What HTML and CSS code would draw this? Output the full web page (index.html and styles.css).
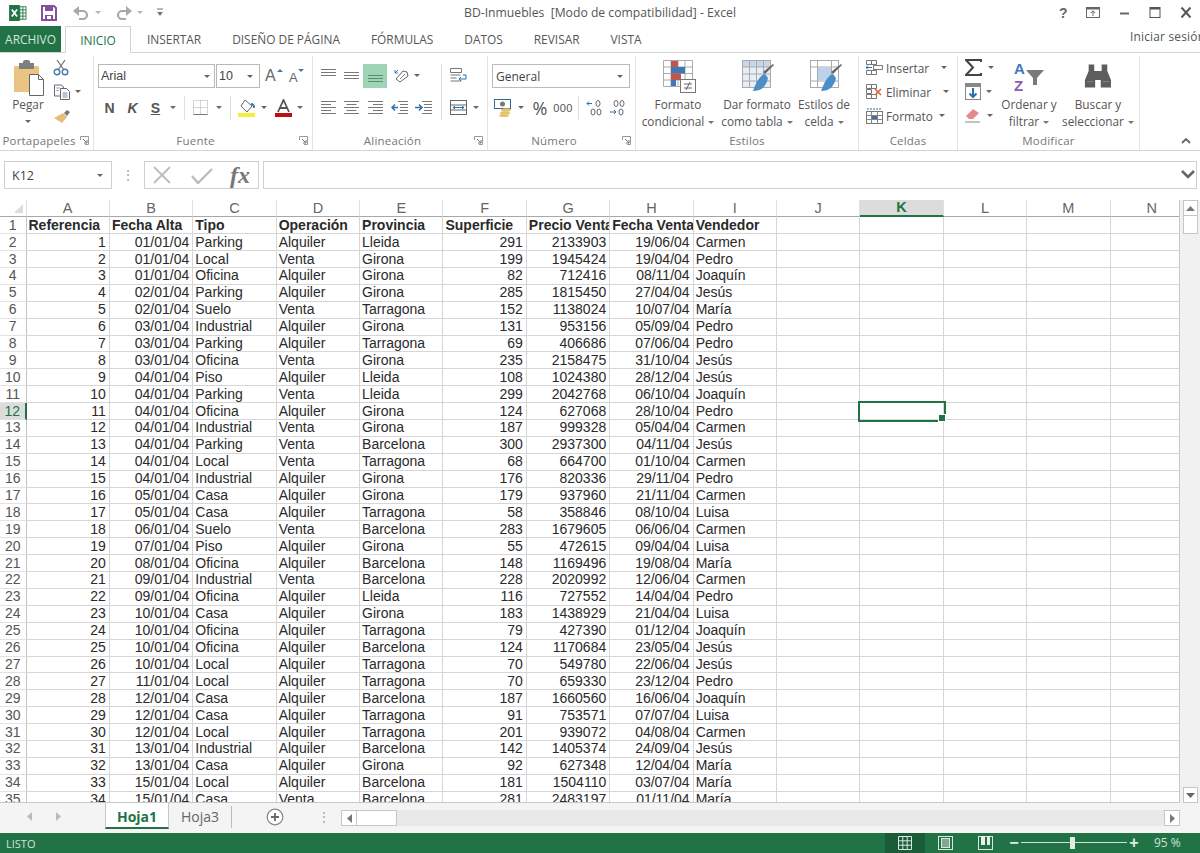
FILE: index.html
```html
<!DOCTYPE html>
<html lang="es">
<head>
<meta charset="utf-8">
<title>BD-Inmuebles - Excel</title>
<link rel="stylesheet" href="styles.css">
</head>
<body>
<div class="app">
  <header class="titlebar">
    <div class="qat">
      <svg class="qat-logo" width="18" height="16" viewBox="0 0 20 18"><rect x="8" y="2" width="11" height="14" fill="#fff" stroke="#217346"/><path d="M12 2v14M15.500 2v14M8 5.500h11M8 9h11M8 12.500h11" stroke="#217346" stroke-width="1"/><rect x="0" y="0" width="12" height="18" fill="#217346"/><path d="M3 5l6 8M9 5l-6 8" stroke="#fff" stroke-width="2"/></svg>
      <svg class="qat-save" width="16" height="16" viewBox="0 0 16 16"><path d="M1 1h12l2 2v12H1z" fill="#fff" stroke="#80519e" stroke-width="2"/><rect x="4" y="1" width="8" height="5" fill="#80519e"/><rect x="4" y="10" width="8" height="5" fill="#80519e"/><rect x="6" y="11" width="4" height="3" fill="#fff"/></svg>
      <svg class="qat-undo" width="16" height="14" viewBox="0 0 16 14"><path d="M3 5h7a4 4 0 0 1 0 8H6" fill="none" stroke="#a9a9a9" stroke-width="2.200"/><path d="M6 0v10L0 5z" fill="#a9a9a9"/></svg>
      <i class="caret light qat-c1"></i>
      <svg class="qat-redo" width="16" height="14" viewBox="0 0 16 14"><path d="M13 5H6a4 4 0 0 0 0 8h4" fill="none" stroke="#a9a9a9" stroke-width="2.200"/><path d="M10 0v10l6-5z" fill="#a9a9a9"/></svg>
      <i class="caret light qat-c2"></i>
      <svg class="qat-more" width="8" height="9" viewBox="0 0 8 9"><path d="M1 1h6" stroke="#777"/><path d="M1 4h6L4 8z" fill="#777"/></svg>
    </div>
    <div class="doc-title">BD-Inmuebles&nbsp; [Modo de compatibilidad] - Excel</div>
    <div class="win">
      <span class="win-help">?</span>
      <svg width="14" height="11" viewBox="0 0 14 11"><rect x=".5" y=".5" width="13" height="10" fill="none" stroke="#666"/><path d="M.5 1.500h13" stroke="#666" stroke-width="2"/><path d="M7 9V4M4.800 6L7 3.800 9.200 6" fill="none" stroke="#666"/></svg>
      <svg width="14" height="11" viewBox="0 0 14 11"><path d="M3 6.500h9" stroke="#666" stroke-width="2"/></svg>
      <svg width="14" height="11" viewBox="0 0 14 11"><rect x="2" y=".5" width="10" height="10" fill="none" stroke="#555"/><path d="M2 1.500h10" stroke="#555" stroke-width="2"/></svg>
      <svg width="14" height="11" viewBox="0 0 14 11"><path d="M2.500 .5l9 10M11.500 .5l-9 10" stroke="#555" stroke-width="2"/></svg>
    </div>
  </header>

  <nav class="tabs">
    <span class="tab-file">ARCHIVO</span>
    <span class="tab-home">INICIO</span>
    <span class="tab">INSERTAR</span>
    <span class="tab">DISEÑO DE PÁGINA</span>
    <span class="tab">FÓRMULAS</span>
    <span class="tab">DATOS</span>
    <span class="tab">REVISAR</span>
    <span class="tab">VISTA</span>
    <span class="signin">Iniciar sesión</span>
  </nav>

  <section class="ribbon">
    <div class="grp g-clip">
      <div class="body">
        <div class="big paste">
          <svg width="32" height="36" viewBox="0 0 32 36"><rect x="1" y="6" width="25" height="26" rx="1" fill="#eac483"/><rect x="6" y="3" width="15" height="6" fill="#7f7f7f"/><rect x="10" y="0" width="7" height="5" rx="2" fill="#7f7f7f"/><path d="M16.500 14.500h9l5 5v16h-14z" fill="#fff" stroke="#666"/><path d="M25.500 14.500v5h5" fill="none" stroke="#666"/></svg>
          <span>Pegar</span>
          <i class="caret pad"></i>
        </div>
        <div class="col">
          <div class="row24 ctr"><svg width="16" height="17" viewBox="0 0 16 17"><path d="M4 1l7 10M12 1L5 11" stroke="#777" stroke-width="1.300"/><circle cx="4" cy="13" r="2.800" fill="none" stroke="#4a78a8" stroke-width="1.400"/><circle cx="12" cy="13" r="2.800" fill="none" stroke="#4a78a8" stroke-width="1.400"/></svg></div>
          <div class="row24 ctr"><svg width="17" height="16" viewBox="0 0 17 16"><path d="M1.500 1h7l2 2v9h-9z" fill="#fff" stroke="#666"/><path d="M7.500 4.500h6l3 3v8h-9z" fill="#fff" stroke="#666"/><path d="M3.500 4h3M3.500 6.500h2M9.500 9h5M9.500 11h5M9.500 13h5" stroke="#6a8fb5"/></svg><i class="caret near"></i></div>
          <div class="row24 ctr"><svg width="18" height="15" viewBox="0 0 18 15"><path d="M11 5l3-3 3 2-3 4z" fill="#777"/><path d="M1 10l9-5 4 4-5 6z" fill="#e4bd7c"/></svg></div>
        </div>
      </div>
      <div class="label"><span>Portapapeles</span><svg class="launch" width="9" height="9" viewBox="0 0 9 9"><path d="M.5 4V.5H8.500V8.500H5" fill="none" stroke="#999"/><path d="M3 3l4 4M7 4v3H4" fill="none" stroke="#777"/></svg></div>
    </div>

    <div class="grp g-font">
      <div class="body rows">
        <div class="rw">
          <div class="combo c-font"><span>Arial</span><i class="caret"></i></div>
          <div class="combo c-size"><span>10</span><i class="caret"></i></div>
          <span class="btn w-grow"><svg width="22" height="19" viewBox="0 0 22 19"><text x="3" y="15" class="a-big">A</text><path d="M15 6l3-3 3 3z" fill="#4a78a8"/></svg></span>
          <span class="btn w-shrink"><svg width="20" height="19" viewBox="0 0 20 19"><text x="3" y="15.500" class="a-small">A</text><path d="M12 3l3 3 3-3z" fill="#4a78a8"/></svg></span>
        </div>
        <div class="rw">
          <span class="btn w23 fmt b">N</span>
          <span class="btn w23 fmt k">K</span>
          <span class="btn w23 fmt s">S</span>
          <span class="btn w12"><i class="caret"></i></span>
          <i class="sep m5"></i>
          <span class="btn w20"><svg width="15" height="15" viewBox="0 0 15 15"><path d="M.5.5h14v14H.5zM7.500.5v14M.5 7.500h14" fill="none" stroke="#aaa" stroke-dasharray="1 1"/><path d="M.5 14.500h14" stroke="#777"/></svg></span>
          <span class="btn w18"><i class="caret"></i></span>
          <i class="sep m-fill"></i>
          <span class="btn w22"><svg width="18" height="18" viewBox="0 0 18 18"><path d="M7 1l7 6-5 6-6-6z" fill="#fff" stroke="#666"/><path d="M13 5c2 0 3 2 3 4" stroke="#4a78a8" stroke-width="2" fill="none"/><rect x="0" y="14" width="17" height="4" fill="#f6ee3a"/></svg></span>
          <span class="btn w12"><i class="caret"></i></span>
          <span class="btn w22 ml2"><svg width="17" height="18" viewBox="0 0 17 18"><path d="M3 13L8.500 1 14 13M5 9h7" fill="none" stroke="#555" stroke-width="1.800"/><rect x="0" y="14" width="17" height="4" fill="#c00b14"/></svg></span>
          <span class="btn w12"><i class="caret"></i></span>
        </div>
      </div>
      <div class="label"><span>Fuente</span><svg class="launch" width="9" height="9" viewBox="0 0 9 9"><path d="M.5 4V.5H8.500V8.500H5" fill="none" stroke="#999"/><path d="M3 3l4 4M7 4v3H4" fill="none" stroke="#777"/></svg></div>
    </div>

    <div class="grp g-align">
      <div class="body split">
        <div class="rows al-left">
          <div class="rw">
            <span class="btn w23"><svg width="15" height="15" viewBox="0 0 15 15"><path d="M0 1.500h15M0 4.500h15M0 7.500h15" stroke="#777"/></svg></span>
            <span class="btn w23"><svg width="15" height="15" viewBox="0 0 15 15"><path d="M0 4.500h15M0 7.500h15M0 10.500h15" stroke="#777"/></svg></span>
            <span class="btn w24 on"><svg width="15" height="15" viewBox="0 0 15 15"><path d="M0 7.500h15M0 10.500h15M0 13.500h15" stroke="#5e8a72"/></svg></span>
            <span class="btn w18 ml-or"><svg width="18" height="16" viewBox="0 0 18 16"><path d="M2 11l7-8 4 1 1 4-8 6z" fill="#fff" stroke="#666"/><path d="M4 2l-3 3M1 2v3h3" fill="none" stroke="#4a78a8"/><path d="M11 6l-5 5" stroke="#888"/></svg></span>
            <i class="caret"></i>
          </div>
          <div class="rw">
            <span class="btn w23"><svg width="15" height="13" viewBox="0 0 15 13"><path d="M0 .5h15M0 3.500h10M0 6.500h15M0 9.500h10M0 12.500h15" stroke="#777"/></svg></span>
            <span class="btn w23"><svg width="15" height="13" viewBox="0 0 15 13"><path d="M0 .5h15M2.500 3.500h10M0 6.500h15M2.500 9.500h10M0 12.500h15" stroke="#777"/></svg></span>
            <span class="btn w24"><svg width="15" height="13" viewBox="0 0 15 13"><path d="M0 .5h15M5 3.500h10M0 6.500h15M5 9.500h10M0 12.500h15" stroke="#777"/></svg></span>
            <span class="btn w24"><svg width="17" height="13" viewBox="0 0 17 13"><path d="M7 .5h10M9 3.500h8M9 6.500h8M9 9.500h8M7 12.500h10" stroke="#777"/><path d="M7 6.500H1M4 3.500l-3 3 3 3" fill="none" stroke="#2f6fb0" stroke-width="1.500"/></svg></span>
            <span class="btn w24"><svg width="17" height="13" viewBox="0 0 17 13"><path d="M7 .5h10M9 3.500h8M9 6.500h8M9 9.500h8M7 12.500h10" stroke="#777"/><path d="M0 6.500h6M4 3.500l3 3-3 3" fill="none" stroke="#2f6fb0" stroke-width="1.500"/></svg></span>
          </div>
        </div>
        <i class="sep tall"></i>
        <div class="rows al-right">
          <div class="rw"><span class="btn w24"><svg width="17" height="16" viewBox="0 0 17 16"><path d="M.5.5h11v4H.5zM.5 7h10M.5 10h6M.5 13h11" fill="none" stroke="#777"/><path d="M13 7h3v4H9M11 9l-2 2 2 2" fill="none" stroke="#2f6fb0"/></svg></span></div>
          <div class="rw"><span class="btn w24"><svg width="17" height="15" viewBox="0 0 17 15"><rect x=".5" y=".5" width="16" height="14" fill="#fff" stroke="#666"/><path d="M.5 5h16M.5 10h16" stroke="#666"/><path d="M3 7.500h11M5 6l-2 1.500L5 9M12 6l2 1.500L12 9" fill="none" stroke="#2f6fb0"/></svg></span><span class="btn w12"><i class="caret"></i></span></div>
        </div>
      </div>
      <div class="label"><span>Alineación</span><svg class="launch" width="9" height="9" viewBox="0 0 9 9"><path d="M.5 4V.5H8.500V8.500H5" fill="none" stroke="#999"/><path d="M3 3l4 4M7 4v3H4" fill="none" stroke="#777"/></svg></div>
    </div>

    <div class="grp g-num">
      <div class="body rows">
        <div class="rw"><div class="combo c-num"><span>General</span><i class="caret"></i></div></div>
        <div class="rw">
          <span class="btn w22"><svg width="18" height="18" viewBox="0 0 18 18"><rect x=".5" y=".5" width="16" height="9" fill="#fff" stroke="#33669a"/><circle cx="8.500" cy="5" r="2.500" fill="#777"/><ellipse cx="12" cy="11" rx="5" ry="1.800" fill="#e8c36f"/><ellipse cx="11" cy="14" rx="5" ry="1.800" fill="#e8c36f"/><ellipse cx="10" cy="16.500" rx="5" ry="1.500" fill="#e8c36f"/></svg></span>
          <span class="btn w13"><i class="caret"></i></span>
          <span class="btn w26 pct">%</span>
          <span class="btn w20 thou">000</span>
          <i class="sep m-num"></i>
          <span class="btn w22 dec"><svg width="18" height="16" viewBox="0 0 18 16"><path d="M6 3.500H1M3 1.500l-2 2 2 2" fill="none" stroke="#2f6fb0"/><ellipse cx="12" cy="3.500" rx="2" ry="3" fill="none" stroke="#666"/><ellipse cx="7" cy="12" rx="2" ry="3" fill="none" stroke="#666"/><ellipse cx="13" cy="12" rx="2" ry="3" fill="none" stroke="#666"/></svg></span>
          <span class="btn w22 ml1 dec"><svg width="18" height="16" viewBox="0 0 18 16"><ellipse cx="7" cy="3.500" rx="2" ry="3" fill="none" stroke="#666"/><ellipse cx="13" cy="3.500" rx="2" ry="3" fill="none" stroke="#666"/><path d="M1 12h6M5 10l2 2-2 2" fill="none" stroke="#2f6fb0"/><ellipse cx="12" cy="12" rx="2" ry="3" fill="none" stroke="#666"/></svg></span>
        </div>
      </div>
      <div class="label"><span>Número</span><svg class="launch" width="9" height="9" viewBox="0 0 9 9"><path d="M.5 4V.5H8.500V8.500H5" fill="none" stroke="#999"/><path d="M3 3l4 4M7 4v3H4" fill="none" stroke="#777"/></svg></div>
    </div>

    <div class="grp g-style">
      <div class="body">
        <div class="big w84">
          <svg class="nudge" width="33" height="33" viewBox="0 0 33 33"><path d="M.5.5h29v26H.5zM.5 7h29M.5 13.500h29M.5 20h29M8 .5v26M15 .5v26M22 .5v26" fill="none" stroke="#aaa"/><rect x="8" y="1" width="7" height="6" fill="#c0574a"/><rect x="8" y="7" width="14" height="6.500" fill="#3f78b8"/><rect x="8" y="13.500" width="10" height="6.500" fill="#c0574a"/><rect x="8" y="20" width="5" height="6" fill="#3f78b8"/><rect x="17.500" y="19.500" width="15" height="13" fill="#fff" stroke="#777"/><path d="M21 24h8M21 28h8M27 22l-4 8" stroke="#666"/></svg>
          <span>Formato</span>
          <span>condicional<i class="caret inl"></i></span>
        </div>
        <div class="big w74">
          <svg class="nudge" width="33" height="33" viewBox="0 0 33 33"><rect x=".5" y=".5" width="28" height="27" fill="#e8eef5" stroke="#aaa"/><rect x="1" y="1" width="27" height="6" fill="#c7d6e8"/><path d="M.5 7h28M.5 14h28M.5 21h28M7.500 .5v27M14.500 .5v27M21.500 .5v27" stroke="#aaa"/><path d="M23 14l9-9-1-1-10 8z" fill="#666"/><path d="M23 14c-4 1-8 6-12 17 8 0 13-4 15-13z" fill="#4a8ec8"/></svg>
          <span>Dar formato</span>
          <span>como tabla<i class="caret inl"></i></span>
        </div>
        <div class="big w60">
          <svg class="nudge2" width="33" height="33" viewBox="0 0 33 33"><rect x=".5" y=".5" width="28" height="27" fill="#fff" stroke="#aaa"/><path d="M.5 7h28M.5 21h28M7.500 .5v27M21.500 .5v27" stroke="#aaa"/><rect x="8" y="7.500" width="13" height="13" fill="#bcd2ea"/><path d="M23 14l9-9-1-1-10 8z" fill="#666"/><path d="M23 14c-4 1-8 6-12 17 8 0 13-4 15-13z" fill="#4a8ec8"/></svg>
          <span>Estilos de</span>
          <span>celda<i class="caret inl"></i></span>
        </div>
      </div>
      <div class="label"><span>Estilos</span></div>
    </div>

    <div class="grp g-cells">
      <div class="body col">
        <div class="row24 cell-row"><svg width="17" height="16" viewBox="0 0 17 16"><path d="M.5.5h5v4h-5zM5.500.5h5v4h-5zM.5 10.500h5v4h-5zM5.500 10.500h5v4h-5zM7.500 5.500h9v4h-9z" fill="#fff" stroke="#777"/><path d="M6 7.500H0M2 5.500l-2 2 2 2" fill="none" stroke="#2f6fb0"/></svg><span>Insertar</span><i class="caret mc"></i></div>
        <div class="row24 cell-row"><svg width="17" height="16" viewBox="0 0 17 16"><path d="M.5.5h5v4h-5zM5.500.5h5v4h-5zM.5 5.500h5v4h-5zM.5 10.500h5v4h-5zM5.500 10.500h5v4h-5z" fill="#fff" stroke="#777"/><path d="M9 5l6 6M15 5l-6 6" stroke="#d8613c" stroke-width="1.500"/></svg><span>Eliminar</span><i class="caret mc"></i></div>
        <div class="row24 cell-row"><svg width="17" height="16" viewBox="0 0 17 16"><rect x=".5" y="3.500" width="16" height="12" fill="#fff" stroke="#777"/><path d="M.5 7.500h16M.5 11.500h16M5.500 3.500v12M11.500 3.500v12" stroke="#888"/><rect x="6" y="8" width="5" height="3" fill="#3f6fa8"/><path d="M1 1h15" stroke="#2f6fb0" stroke-dasharray="2 1"/></svg><span>Formato</span><i class="caret ms"></i></div>
      </div>
      <div class="label"><span>Celdas</span></div>
    </div>

    <div class="grp g-edit">
      <div class="body">
        <div class="col edit-tools">
          <div class="row24 ed"><svg width="17" height="17" viewBox="0 0 17 17"><path d="M16 3V1H1l7 7.500L1 16h15v-2" fill="none" stroke="#444" stroke-width="2"/></svg><i class="caret c1"></i></div>
          <div class="row24 ed"><svg width="16" height="17" viewBox="0 0 16 17"><rect x=".5" y=".5" width="15" height="16" fill="#fff" stroke="#888"/><rect x="1" y="1" width="14" height="3" fill="#888"/><path d="M8 5v9M4.500 10.500L8 14l3.500-3.500" fill="none" stroke="#2f6fb0" stroke-width="2"/></svg><i class="caret c2"></i></div>
          <div class="row24 ed"><svg width="17" height="15" viewBox="0 0 17 15"><path d="M1 8l7-7 6 4-6 6H4z" fill="#e58a8a"/><path d="M0 14h15" stroke="#888"/></svg><i class="caret c2"></i></div>
        </div>
        <div class="big w56">
          <svg class="sort" width="32" height="35" viewBox="0 0 32 35"><text x="1" y="14" class="s-a">A</text><text x="1" y="31" class="s-z">Z</text><path d="M13 10h18l-7 8v7h-4v-7z" fill="#7a7a7a"/></svg>
          <span>Ordenar y</span>
          <span>filtrar<i class="caret inl"></i></span>
        </div>
        <div class="big w82">
          <svg width="30" height="33" viewBox="0 0 30 33"><g transform="translate(1 2) scale(.93 .82)"><path d="M5 3h6v8h8V3h6v8l4 11v9H18v-9h-6v9H1v-9l4-11z" fill="#5d5d5d"/><path d="M3 24h7M20 24h7" stroke="#8a8a8a"/></g></svg>
          <span>Buscar y</span>
          <span>seleccionar<i class="caret inl"></i></span>
        </div>
      </div>
      <div class="label"><span>Modificar</span></div>
    </div>

    <div class="collapse"><svg width="10" height="6" viewBox="0 0 10 6"><path d="M1 5l4-4 4 4" fill="none" stroke="#666" stroke-width="1.800"/></svg></div>
  </section>

  <section class="formula">
    <div class="namebox"><span>K12</span><i class="caret"></i></div>
    <div class="dots">⋮</div>
    <div class="fx-box">
      <svg width="20" height="18" viewBox="0 0 20 18"><path d="M2 1l16 16M18 1L2 17" stroke="#bdbdbd" stroke-width="1.800"/></svg>
      <svg width="22" height="18" viewBox="0 0 22 18"><path d="M1 10l6 7L21 3" fill="none" stroke="#bdbdbd" stroke-width="2.400"/></svg>
      <span class="fx">fx</span>
    </div>
    <div class="input"><svg width="14" height="9" viewBox="0 0 14 9"><path d="M1 1l6 6 6-6" fill="none" stroke="#666" stroke-width="2.600"/></svg></div>
  </section>

  <section class="sheet">
    <div class="grid">
      <table>
        <colgroup><col class="c-h"><col class="c-w"><col class="c-w"><col class="c-w"><col class="c-w"><col class="c-w"><col class="c-w"><col class="c-w"><col class="c-w"><col class="c-w"><col class="c-w"><col class="c-w"><col class="c-w"><col class="c-w"></colgroup>
        <thead>
          <tr><th class="corner"><i></i></th><th>A</th><th>B</th><th>C</th><th>D</th><th>E</th><th>F</th><th>G</th><th>H</th><th>I</th><th>J</th><th class="cur">K</th><th>L</th><th>M</th><th>N</th></tr>
        </thead>
        <tbody>
<tr class="hd"><th>1<td>Referencia<td>Fecha Alta<td>Tipo<td>Operación<td>Provincia<td>Superficie<td>Precio Venta<td>Fecha Venta<td>Vendedor<td><td><td><td><td>
<tr><th>2<td>1<td>01/01/04<td>Parking<td>Alquiler<td>Lleida<td>291<td>2133903<td>19/06/04<td>Carmen<td><td><td><td><td>
<tr><th>3<td>2<td>01/01/04<td>Local<td>Venta<td>Girona<td>199<td>1945424<td>19/04/04<td>Pedro<td><td><td><td><td>
<tr><th>4<td>3<td>01/01/04<td>Oficina<td>Alquiler<td>Girona<td>82<td>712416<td>08/11/04<td>Joaquín<td><td><td><td><td>
<tr><th>5<td>4<td>02/01/04<td>Parking<td>Alquiler<td>Girona<td>285<td>1815450<td>27/04/04<td>Jesús<td><td><td><td><td>
<tr><th>6<td>5<td>02/01/04<td>Suelo<td>Venta<td>Tarragona<td>152<td>1138024<td>10/07/04<td>María<td><td><td><td><td>
<tr><th>7<td>6<td>03/01/04<td>Industrial<td>Alquiler<td>Girona<td>131<td>953156<td>05/09/04<td>Pedro<td><td><td><td><td>
<tr><th>8<td>7<td>03/01/04<td>Parking<td>Alquiler<td>Tarragona<td>69<td>406686<td>07/06/04<td>Pedro<td><td><td><td><td>
<tr><th>9<td>8<td>03/01/04<td>Oficina<td>Venta<td>Girona<td>235<td>2158475<td>31/10/04<td>Jesús<td><td><td><td><td>
<tr><th>10<td>9<td>04/01/04<td>Piso<td>Alquiler<td>Lleida<td>108<td>1024380<td>28/12/04<td>Jesús<td><td><td><td><td>
<tr><th>11<td>10<td>04/01/04<td>Parking<td>Venta<td>Lleida<td>299<td>2042768<td>06/10/04<td>Joaquín<td><td><td><td><td>
<tr class="cur-row"><th>12<td>11<td>04/01/04<td>Oficina<td>Alquiler<td>Girona<td>124<td>627068<td>28/10/04<td>Pedro<td><td class="sel"><td><td><td>
<tr><th>13<td>12<td>04/01/04<td>Industrial<td>Venta<td>Girona<td>187<td>999328<td>05/04/04<td>Carmen<td><td><td><td><td>
<tr><th>14<td>13<td>04/01/04<td>Parking<td>Venta<td>Barcelona<td>300<td>2937300<td>04/11/04<td>Jesús<td><td><td><td><td>
<tr><th>15<td>14<td>04/01/04<td>Local<td>Venta<td>Tarragona<td>68<td>664700<td>01/10/04<td>Carmen<td><td><td><td><td>
<tr><th>16<td>15<td>04/01/04<td>Industrial<td>Alquiler<td>Girona<td>176<td>820336<td>29/11/04<td>Pedro<td><td><td><td><td>
<tr><th>17<td>16<td>05/01/04<td>Casa<td>Alquiler<td>Girona<td>179<td>937960<td>21/11/04<td>Carmen<td><td><td><td><td>
<tr><th>18<td>17<td>05/01/04<td>Casa<td>Alquiler<td>Tarragona<td>58<td>358846<td>08/10/04<td>Luisa<td><td><td><td><td>
<tr><th>19<td>18<td>06/01/04<td>Suelo<td>Venta<td>Barcelona<td>283<td>1679605<td>06/06/04<td>Carmen<td><td><td><td><td>
<tr><th>20<td>19<td>07/01/04<td>Piso<td>Alquiler<td>Girona<td>55<td>472615<td>09/04/04<td>Luisa<td><td><td><td><td>
<tr><th>21<td>20<td>08/01/04<td>Oficina<td>Alquiler<td>Barcelona<td>148<td>1169496<td>19/08/04<td>María<td><td><td><td><td>
<tr><th>22<td>21<td>09/01/04<td>Industrial<td>Venta<td>Barcelona<td>228<td>2020992<td>12/06/04<td>Carmen<td><td><td><td><td>
<tr><th>23<td>22<td>09/01/04<td>Oficina<td>Alquiler<td>Lleida<td>116<td>727552<td>14/04/04<td>Pedro<td><td><td><td><td>
<tr><th>24<td>23<td>10/01/04<td>Casa<td>Alquiler<td>Girona<td>183<td>1438929<td>21/04/04<td>Luisa<td><td><td><td><td>
<tr><th>25<td>24<td>10/01/04<td>Oficina<td>Alquiler<td>Tarragona<td>79<td>427390<td>01/12/04<td>Joaquín<td><td><td><td><td>
<tr><th>26<td>25<td>10/01/04<td>Oficina<td>Alquiler<td>Barcelona<td>124<td>1170684<td>23/05/04<td>Jesús<td><td><td><td><td>
<tr><th>27<td>26<td>10/01/04<td>Local<td>Alquiler<td>Tarragona<td>70<td>549780<td>22/06/04<td>Jesús<td><td><td><td><td>
<tr><th>28<td>27<td>11/01/04<td>Local<td>Alquiler<td>Tarragona<td>70<td>659330<td>23/12/04<td>Pedro<td><td><td><td><td>
<tr><th>29<td>28<td>12/01/04<td>Casa<td>Alquiler<td>Barcelona<td>187<td>1660560<td>16/06/04<td>Joaquín<td><td><td><td><td>
<tr><th>30<td>29<td>12/01/04<td>Casa<td>Alquiler<td>Tarragona<td>91<td>753571<td>07/07/04<td>Luisa<td><td><td><td><td>
<tr><th>31<td>30<td>12/01/04<td>Local<td>Alquiler<td>Tarragona<td>201<td>939072<td>04/08/04<td>Carmen<td><td><td><td><td>
<tr><th>32<td>31<td>13/01/04<td>Industrial<td>Alquiler<td>Barcelona<td>142<td>1405374<td>24/09/04<td>Jesús<td><td><td><td><td>
<tr><th>33<td>32<td>13/01/04<td>Casa<td>Alquiler<td>Girona<td>92<td>627348<td>12/04/04<td>María<td><td><td><td><td>
<tr><th>34<td>33<td>15/01/04<td>Local<td>Alquiler<td>Barcelona<td>181<td>1504110<td>03/07/04<td>María<td><td><td><td><td>
<tr><th>35<td>34<td>15/01/04<td>Casa<td>Venta<td>Barcelona<td>281<td>2483197<td>01/11/04<td>María<td><td><td><td><td>
        </tbody>
      </table>
    </div>
    <div class="vscroll">
      <span class="sb-btn"><svg width="9" height="5" viewBox="0 0 9 5"><path d="M0 5l4.500-5L9 5z" fill="#777"/></svg></span>
      <span class="sb-thumb"></span>
      <span class="sb-track"></span>
      <span class="sb-btn"><svg width="9" height="5" viewBox="0 0 9 5"><path d="M0 0l4.500 5L9 0z" fill="#666"/></svg></span>
    </div>
  </section>

  <section class="sheets">
    <div class="nav"><svg width="5" height="9" viewBox="0 0 5 9"><path d="M5 0L0 4.500 5 9z" fill="#bbb"/></svg><svg width="5" height="9" viewBox="0 0 5 9"><path d="M0 0l5 4.500L0 9z" fill="#bbb"/></svg></div>
    <span class="sheet-on">Hoja1</span>
    <span class="sheet-off">Hoja3</span>
    <i class="sheet-sep"></i>
    <svg class="add" width="18" height="18" viewBox="0 0 18 18"><circle cx="9" cy="9" r="7.800" fill="#fff" stroke="#888" stroke-width="1.200"/><path d="M9 5v8M5 9h8" stroke="#666" stroke-width="1.800"/></svg>
    <span class="sheet-dots">⋮</span>
    <div class="hscroll">
      <span class="hb"><svg width="5" height="9" viewBox="0 0 5 9"><path d="M5 0L0 4.500 5 9z" fill="#777"/></svg></span>
      <span class="hthumb"></span>
      <span class="htrack"></span>
      <span class="hb"><svg width="5" height="9" viewBox="0 0 5 9"><path d="M0 0l5 4.500L0 9z" fill="#777"/></svg></span>
    </div>
  </section>

  <footer class="status">
    <span class="ready">LISTO</span>
    <span class="view on-view"><svg width="14" height="14" viewBox="0 0 14 14"><path d="M.5.5h13v13H.5zM.5 4.800h13M.5 9.200h13M4.800.5v13M9.200.5v13" fill="none" stroke="#d8e8de"/></svg></span>
    <span class="view"><svg width="15" height="14" viewBox="0 0 15 14"><rect x=".5" y=".5" width="14" height="13" fill="none" stroke="#d8e8de"/><rect x="3.500" y="2.500" width="8" height="9" fill="#7fa892" stroke="#d8e8de"/></svg></span>
    <span class="view"><svg width="15" height="14" viewBox="0 0 15 14"><rect x=".5" y=".5" width="14" height="13" fill="none" stroke="#d8e8de"/><path d="M3 0h4v9H3zM9 0h3v9H9z" fill="#e8f0ea"/></svg></span>
    <div class="zoom">
      <span class="zm">−</span>
      <div class="slider"><i></i></div>
      <span class="zm">+</span>
    </div>
    <span class="pct-z">95 %</span>
  </footer>
</div>
</body>
</html>
```
FILE: styles.css
```css
* { box-sizing: border-box; }
html, body { margin: 0; padding: 0; background: #fff; }
body { font-family: "Open Sans", "Noto Sans", sans-serif; color: #555; overflow: hidden; }
i { font-style: normal; }
svg { display: block; flex: none; }
.app { width: 1200px; height: 853px; display: flex; flex-direction: column; overflow: hidden; }

/* title bar */
.titlebar { height: 26px; display: grid; grid-template-columns: 1fr auto 1fr; align-items: center; }
.qat { display: flex; align-items: center; }
.qat-logo { margin-left: 9px; }
.qat-save { margin-left: 14px; }
.qat-undo { margin-left: 16px; }
.qat-c1 { margin-left: 6px; }
.qat-redo { margin-left: 15px; }
.qat-c2 { margin-left: 5px; }
.qat-more { margin-left: 13px; }
.doc-title { font-size: 12.200px; color: #555; }
.win { display: flex; align-items: center; justify-content: flex-end; gap: 17px; padding-right: 7px; }
.win-help { font: bold 14px "Liberation Sans", sans-serif; width: 10px; color: #666; }

/* tabs */
.tabs { height: 27px; display: flex; align-items: stretch; border-bottom: 1px solid #d4d4d4; font-size: 11.900px; color: #555; line-height: 27px; white-space: nowrap; }
.tab-file { width: 61px; height: 26px; background: #217346; color: #d7e6dc; text-align: center; }
.tab-home { width: 66px; height: 27px; margin-left: 4px; margin-right: .5px; background: #fff; border: 1px solid #d4d4d4; border-bottom: 0; color: #217346; text-align: center; position: relative; }
.tab { padding: 0 15.500px; }
.signin { margin-left: auto; margin-right: -8px; color: #555; line-height: 21px; letter-spacing: .2px; width: 78px; }

/* ribbon */
.ribbon { height: 98px; padding-top: 3px; border-bottom: 1px solid #d4d4d4; display: flex; font-size: 11.800px; white-space: nowrap; }
.grp { height: 94px; display: flex; flex-direction: column; border-right: 1px solid #e4e4e4; }
.body { height: 76px; display: flex; }
.label { height: 18px; display: flex; align-items: center; font-size: 11.500px; color: #777; line-height: 16px; letter-spacing: .2px; }
.label span { flex: 1; text-align: center; }
.launch { margin-right: 4px; margin-left: 2px; }
.g-clip { width: 94px; }
.g-font { width: 219px; }
.g-align { width: 175px; }
.g-num { width: 148px; }
.g-style { width: 223px; }
.g-cells { width: 99px; }
.g-edit { width: 182px; }
.collapse { flex: 1; display: flex; align-items: flex-end; justify-content: flex-end; padding: 0 9px 6px 0; }

.caret { display: inline-block; width: 0; height: 0; border-top: 3px solid #666; border-left: 3px solid transparent; border-right: 3px solid transparent; flex: none; }
.caret.light { border-top-color: #b5b5b5; }
.caret.inl { margin-left: 4px; vertical-align: middle; border-top-color: #777; }
.caret.pad { margin-top: 7px; }
.caret.near { margin-left: 5px; }

.big { display: flex; flex-direction: column; align-items: center; padding-top: 4px; line-height: 17px; flex: none; }
.big svg { margin-bottom: 3px; }
.big svg.nudge { margin-left: 3px; }
.big svg.nudge2 { margin-left: 5px; }
.big svg.sort { margin-bottom: 1px; }
.paste { width: 50px; margin-left: 3px; }
.big.paste svg { margin-bottom: 0; margin-left: 1px; }
.w84 { width: 84px; }
.w74 { width: 74px; }
.w60 { width: 60px; }
.w56 { width: 56px; }
.w82 { width: 82px; }

.col { display: flex; flex-direction: column; }
.row24 { height: 24px; display: flex; align-items: center; }
.ctr { padding-left: 0; }

.rows { display: flex; flex-direction: column; gap: 8px; padding-top: 8px; }
.rw { display: flex; align-items: center; height: 24px; }
.split { display: flex; }
.g-font .rows { padding-left: 4px; }
.g-num .rows { padding-left: 4px; }

.combo { height: 24px; background: #fff; border: 1px solid #b8b8b8; display: flex; align-items: center; justify-content: space-between; padding: 1px 4px 0 2px; font-family: "Liberation Sans", sans-serif; font-size: 12.500px; color: #444; }
.c-font { width: 117px; margin-right: 1px; }
.c-size { width: 44px; padding-right: 6px; }
.c-num { width: 138px; font-family: "Open Sans", sans-serif; font-size: 12px; padding-left: 3px; padding-right: 6px; border-color: #bbb; }

.btn { display: flex; align-items: center; justify-content: center; height: 24px; flex: none; }
.w12 { width: 12px; } .w13 { width: 13px; } .w18 { width: 18px; } .w20 { width: 20px; }
.w22 { width: 22px; } .w23 { width: 23px; } .w24 { width: 24px; } .w26 { width: 26px; }
.w-grow { width: 24px; margin-left: 1px; }
.w-shrink { width: 22px; }
.ml2 { margin-left: 2px; } .ml1 { margin-left: 1px; }
.ml-or { margin-left: 7px; margin-right: 2px; }
.on { background: #9fd5b7; }
.fmt { font-family: "Liberation Sans", sans-serif; font-size: 14px; font-weight: bold; color: #555; }
.fmt.k { font-style: italic; }
.fmt.s { text-decoration: underline; }
.sep { display: block; width: 1px; background: #e0e0e0; height: 24px; flex: none; }
.m5 { margin: 0 5px; }
.m-fill { margin: 0 5px 0 2px; }
.m-num { margin: 0 5px; }
.tall { height: 56px; margin-top: 8px; }
.al-left { width: 128px; padding-left: 4px; }
.al-right { padding-left: 4px; }
.pct { font-size: 18px; color: #555; }
.thou { font: 11px "Liberation Sans", sans-serif; color: #555; letter-spacing: .3px; }

.a-big { font: 16px "Liberation Sans", sans-serif; fill: #666; }
.a-small { font: 13px "Liberation Sans", sans-serif; fill: #666; }
.s-a { font: bold 15px "Liberation Sans", sans-serif; fill: #3f78b8; }
.s-z { font: bold 15px "Liberation Sans", sans-serif; fill: #8a5bb0; }

.g-cells .body { padding: 0 0 0 7px; }
.cell-row { gap: 3px; color: #555; }
.mc { margin-left: 9px; }
.ms { margin-left: 3px; }

.edit-tools { width: 43px; padding-left: 7px; }
.ed svg { flex: none; }
.c1 { margin-left: 6px; }
.c2 { margin-left: 5px; }

/* formula bar */
.formula { height: 39px; padding: 10px 3px 0 4px; display: flex; align-items: flex-start; }
.namebox { width: 108px; height: 28px; border: 1px solid #d0d0d0; display: flex; align-items: center; justify-content: space-between; padding: 1px 8px 0 7px; font-size: 12.500px; color: #444; }
.dots { width: 32px; text-align: center; color: #aaa; line-height: 28px; font-size: 14px; }
.fx-box { width: 115px; height: 28px; border: 1px solid #d0d0d0; display: flex; align-items: center; padding-left: 7px; gap: 19px; }
.fx { font: italic bold 24px "Liberation Serif", serif; color: #777; line-height: 24px; margin-left: -2px; }
.input { flex: 1; margin-left: 4px; height: 28px; border: 1px solid #d0d0d0; display: flex; align-items: center; justify-content: flex-end; padding-right: 1px; }

/* grid */
.sheet { height: 614px; padding-top: 11px; display: flex; }
.grid { width: 1180px; height: 603px; overflow: hidden; border-right: 1px solid #c8c8c8; border-bottom: 1px solid #c8c8c8; flex: none; }
table { border-collapse: separate; border-spacing: 0; table-layout: fixed; width: 1194.100px; font: 14px/15px "Liberation Sans", sans-serif; color: #2a2a2a; }
.c-h { width: 26.500px; }
.c-w { width: 83.400px; }
thead th { height: 17px; font-weight: normal; font-size: 14.500px; line-height: 15px; color: #666; padding: 0; border-right: 1px solid #e0e0e0; border-bottom: 1px solid #a8a8a8; }
thead th.cur { background: #dcdcdc; color: #217346; font-weight: bold; border-bottom: 2px solid #217346; }
.corner i { display: block; width: 0; height: 0; margin-left: 14px; border-left: 9px solid transparent; border-bottom: 9px solid #dcdcdc; }
tbody tr { height: 16.900px; }
tbody th { font-weight: normal; font-size: 14px; color: #555; padding: 0; border-right: 1px solid #c4c4c4; border-bottom: 1px solid #e2e2e2; text-align: center; }
tbody td { padding: 0 2px; overflow: hidden; white-space: nowrap; border-right: 1px solid #d6d6d6; border-bottom: 1px solid #d6d6d6; }
tbody td:nth-child(2), tbody td:nth-child(3), tbody td:nth-child(7), tbody td:nth-child(8), tbody td:nth-child(9) { text-align: right; padding-right: 3px; }
.hd td { font-weight: bold; text-align: left !important; padding-left: 2px; }
.cur-row th { background: #dcdcdc; color: #217346; border-right: 2px solid #217346; }
td.sel { outline: 2px solid #217346; outline-offset: 0; position: relative; overflow: visible; }
td.sel::after { content: ""; position: absolute; right: -3px; bottom: -3px; width: 6px; height: 6px; background: #217346; border: 1px solid #fff; }

/* vertical scrollbar */
.vscroll { flex: 1; display: flex; flex-direction: column; align-items: center; background: #f1f1f1; width: 20px; }
.sb-btn { width: 15px; height: 16px; background: #fff; border: 1px solid #c6c6c6; display: flex; align-items: center; justify-content: center; flex: none; }
.sb-thumb { width: 15px; height: 18px; background: #fff; border: 1px solid #c6c6c6; border-top: 0; flex: none; }
.sb-track { flex: 1; }

/* sheet tabs */
.sheets { height: 30px; background: #f4f4f4; display: flex; align-items: flex-start; font-size: 14px; color: #666; }
.nav { width: 105px; height: 26px; padding: 0 44px 0 27px; display: flex; align-items: center; justify-content: space-between; }
.sheet-on { width: 64px; height: 26px; background: #fff; color: #217346; font-weight: bold; text-align: center; line-height: 27px; border-bottom: 2px solid #217346; border-left: 1px solid #c8c8c8; border-right: 1px solid #c8c8c8; }
.sheet-off { width: 62px; height: 26px; text-align: center; line-height: 27px; }
.sheet-sep { width: 1px; height: 22px; margin-top: 3px; background: #bbb; flex: none; }
.add { margin: 5px 0 0 34px; }
.sheet-dots { width: 50px; text-align: center; color: #aaa; line-height: 28px; margin-left: 15px; margin-right: -8px; }
.hscroll { flex: 1; display: flex; align-items: center; height: 16px; margin: 7px 20px 0 0; background: #e9e9e9; }
.hb { width: 16px; height: 16px; background: #fff; border: 1px solid #c6c6c6; display: flex; align-items: center; justify-content: center; flex: none; }
.hthumb { width: 40px; height: 16px; background: #fff; border: 1px solid #c6c6c6; border-left: 0; flex: none; }
.htrack { flex: 1; }

/* status bar */
.status { height: 20px; background: #217346; color: #cfe2d6; display: flex; align-items: center; font-size: 11px; }
.ready { width: 885px; padding: 1px 0 0 6px; }
.view { width: 40px; height: 20px; display: flex; align-items: center; justify-content: center; flex: none; }
.on-view { background: #1a5c38; }
.zoom { display: flex; align-items: center; margin-left: 4px; }
.zm { font: bold 16px/20px "Liberation Sans", sans-serif; width: 10px; text-align: center; color: #dfece4; }
.slider { width: 106px; height: 1px; margin: 0 2px; background: #cfe2d6; display: flex; align-items: center; padding-left: 49px; }
.slider i { display: block; width: 5px; height: 12px; background: #dfece4; flex: none; }
.pct-z { margin-left: 15px; font-size: 12px; }
```
